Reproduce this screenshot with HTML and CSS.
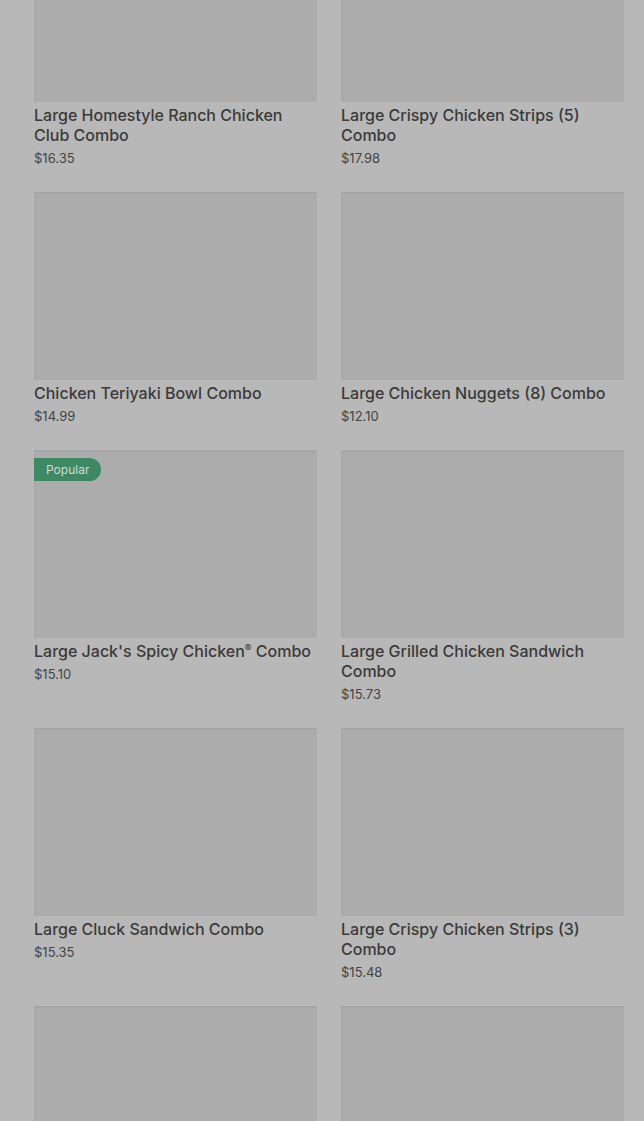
FILE: index.html
```html
<!DOCTYPE html>
<html lang="en">

<head>
    <meta charset="UTF-8">
    <meta name="viewport" content="width=device-width, initial-scale=1.0">
    <title>Chicken Combos</title>
    <link rel="stylesheet" href="styles.css">
</head>

<body>
    <div class="menu-grid">
        <div class="item">
            <div class="thumb"></div>
            <h3 class="item-name">Large Homestyle Ranch Chicken Club Combo</h3>
            <p class="item-price">$16.35</p>
        </div>
        <div class="item">
            <div class="thumb"></div>
            <h3 class="item-name">Large Crispy Chicken Strips (5) Combo</h3>
            <p class="item-price">$17.98</p>
        </div>
        <div class="item">
            <div class="thumb"></div>
            <h3 class="item-name">Chicken Teriyaki Bowl Combo</h3>
            <p class="item-price">$14.99</p>
        </div>
        <div class="item">
            <div class="thumb"></div>
            <h3 class="item-name">Large Chicken Nuggets (8) Combo</h3>
            <p class="item-price">$12.10</p>
        </div>
        <div class="item">
            <div class="thumb">
                <span class="badge">Popular</span>
            </div>
            <h3 class="item-name">Large Jack's Spicy Chicken<span class="reg">®</span> Combo</h3>
            <p class="item-price">$15.10</p>
        </div>
        <div class="item">
            <div class="thumb"></div>
            <h3 class="item-name">Large Grilled Chicken Sandwich Combo</h3>
            <p class="item-price">$15.73</p>
        </div>
        <div class="item">
            <div class="thumb"></div>
            <h3 class="item-name">Large Cluck Sandwich Combo</h3>
            <p class="item-price">$15.35</p>
        </div>
        <div class="item">
            <div class="thumb"></div>
            <h3 class="item-name">Large Crispy Chicken Strips (3) Combo</h3>
            <p class="item-price">$15.48</p>
        </div>
        <div class="item">
            <div class="thumb"></div>
        </div>
        <div class="item">
            <div class="thumb"></div>
        </div>
    </div>
</body>

</html>
```

FILE: styles.css
```css
body {
    font-family: Inter, Roboto, sans-serif;
    margin: 0;
    padding: 0;
    height: 100vh;
    overflow: hidden;
    background-color: #b8b8b8;
}

/* page is scrolled a bit: first row is partly above the fold */
.menu-grid {
    display: grid;
    grid-template-columns: 1fr 1fr;
    column-gap: 24px;
    row-gap: 24px;
    padding: 0 20px 0 34px;
    margin-top: -86px;
}

.item {
    display: flex;
    flex-direction: column;
}

.thumb {
    position: relative;
    height: 188px;
    background: #acacac;
    box-shadow: inset 0 2px 0 #a6a6a6, inset 2px 0 0 #a9a9a9;
}

.badge {
    position: absolute;
    top: 8px;
    left: 0;
    height: 23px;
    padding: 0 12px;
    line-height: 23px;
    font-size: 12px;
    color: #d2dbd6;
    background: #3e8963;
    border-radius: 0 12px 12px 0;
}

.item-name {
    margin: 3px 0 0;
    font-size: 16px;
    font-weight: 500;
    line-height: 20px;
    color: #3a3a3a;
}

.item-name .reg {
    font-size: 10px;
    vertical-align: 5px;
    line-height: 0;
}

.item-price {
    margin: 3px 0 0;
    font-size: 13px;
    line-height: 20px;
    color: #444;
}
```
